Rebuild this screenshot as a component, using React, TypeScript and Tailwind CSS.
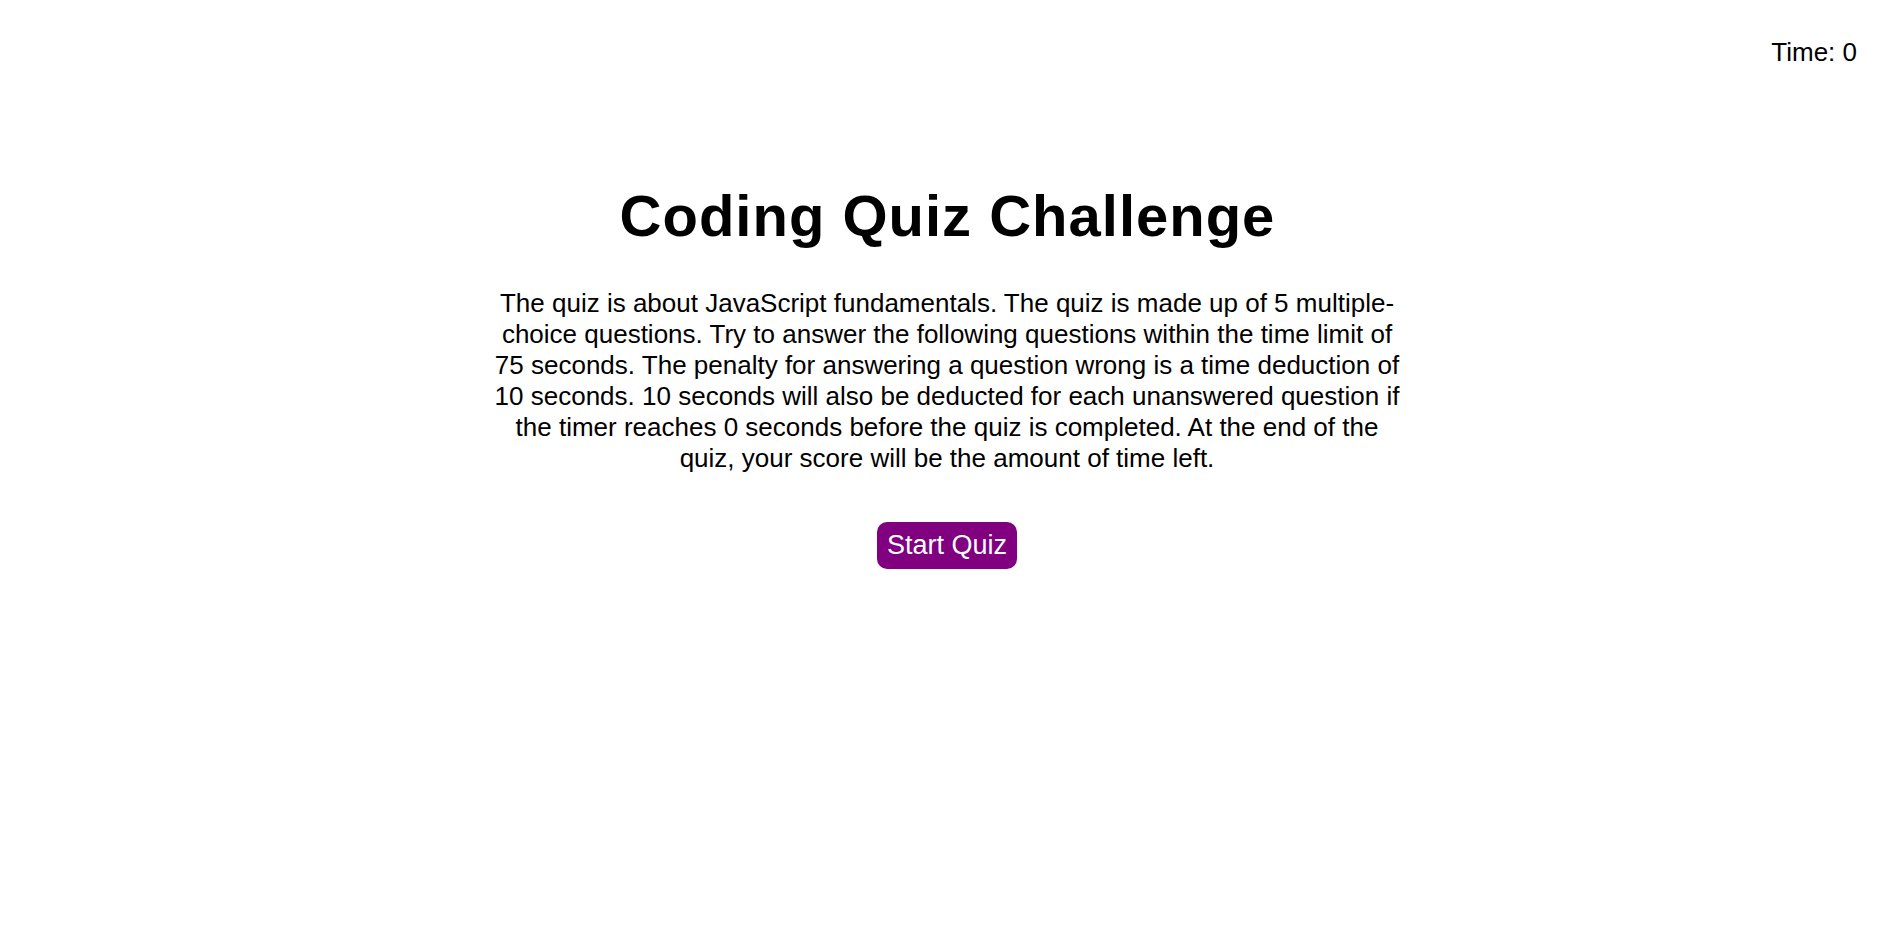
import React from "react";

export default function App() {
  return (
    <div className="min-h-screen bg-white text-black" style={{ fontFamily: '"Liberation Sans", Arial, sans-serif' }}>
      <div className="flex justify-end pr-[37px] pt-[37px] text-[26px] leading-[30px]">
        <span>Time: 0</span>
      </div>
      <div className="flex flex-col items-center mt-[116px]">
        <h1 className="text-[58px] font-bold leading-[66px] tracking-[1px] mr-[-1px]">Coding Quiz Challenge</h1>
        <p className="mt-[39px] w-[912px] text-center text-[26px] leading-[31px]">
          The quiz is about JavaScript fundamentals. The quiz is made up of 5 multiple-choice questions. Try to answer the following questions within the time limit of 75 seconds. The penalty for answering a question wrong is a time deduction of 10 seconds. 10 seconds will also be deducted for each unanswered question if the timer reaches 0 seconds before the quiz is completed. At the end of the quiz, your score will be the amount of time left.
        </p>
        <button className="mt-[48px] h-[47px] w-[140px] rounded-[10px] bg-[#800080] text-white text-[27px] leading-[31px]">
          Start Quiz
        </button>
      </div>
    </div>
  );
}
